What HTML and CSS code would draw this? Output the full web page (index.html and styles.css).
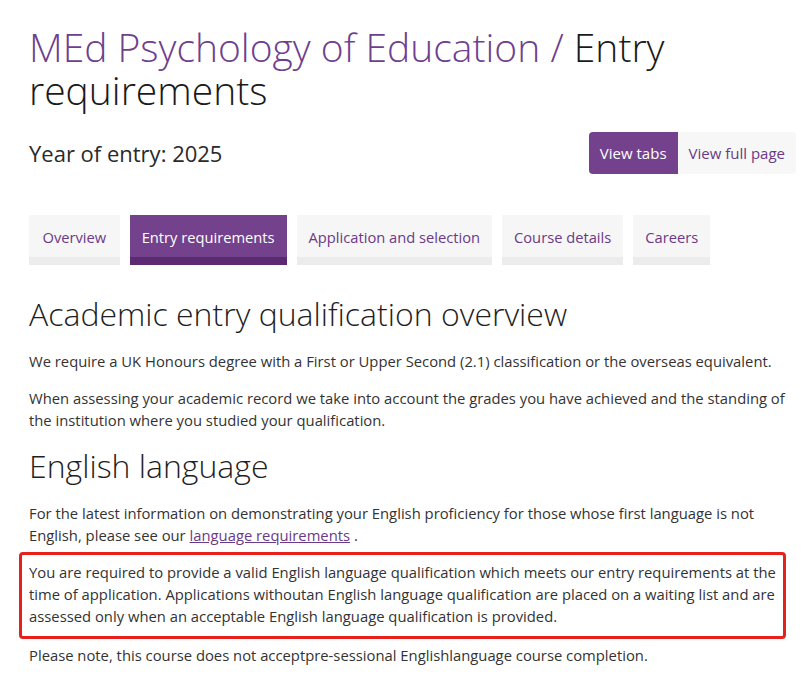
FILE: index.html
```html
<!DOCTYPE html>
<html lang="en">
<head>
<meta charset="utf-8">
<title>MEd Psychology of Education / Entry requirements</title>
<link rel="stylesheet" href="styles.css">
</head>
<body>
<main class="page">
  <h1 class="title"><span class="title-course">MEd Psychology of Education /</span> Entry requirements</h1>

  <div class="year-row">
    <div class="year">Year of entry: 2025</div>
    <div class="view-toggle">
      <a class="view-btn active" href="#">View tabs</a>
      <a class="view-btn" href="#">View full page</a>
    </div>
  </div>

  <nav class="tabs">
    <a class="tab" href="#">Overview</a>
    <a class="tab active" href="#">Entry requirements</a>
    <a class="tab" href="#">Application and selection</a>
    <a class="tab" href="#">Course details</a>
    <a class="tab" href="#">Careers</a>
  </nav>

  <section class="content">
    <h2>Academic entry qualification overview</h2>
    <p>We require a UK Honours degree with a First or Upper Second (2.1) classification or the overseas equivalent.</p>
    <p>When assessing your academic record we take into account the grades you have achieved and the standing of the institution where you studied your qualification.</p>

    <h2>English language</h2>
    <p>For the latest information on demonstrating your English proficiency for those whose first language is not English, please see our <a class="link" href="#">language requirements</a> .</p>
    <div class="highlight">
      <p>You are required to provide a valid English language qualification which meets our entry requirements at the time of application. Applications withoutan English language qualification are placed on a waiting list and are assessed only when an acceptable English language qualification is provided.</p>
    </div>
    <p>Please note, this course does not acceptpre-sessional Englishlanguage course completion.</p>
  </section>
</main>
</body>
</html>
```

FILE: styles.css
```css
* { box-sizing: border-box; }

html, body {
  margin: 0;
  padding: 0;
  background: #ffffff;
}

body {
  font-family: "Open Sans", "Liberation Sans", sans-serif;
  color: #333333;
  font-size: 14.8px;
  line-height: 22.2px;
}

.page {
  padding: 25px 10px 0 29px;
}

.title {
  margin: 0;
  font-size: 39px;
  line-height: 43px;
  font-weight: 300;
  color: #1a1a1a;
}

.title-course {
  color: #6f3f8f;
}

.year-row {
  display: flex;
  align-items: center;
  justify-content: space-between;
  margin-top: 21px;
}

.year {
  font-size: 22px;
  line-height: 28px;
  color: #2a2a2a;
}

.view-toggle {
  display: flex;
}

.view-btn {
  display: block;
  height: 42px;
  line-height: 42px;
  padding: 0 11px;
  font-size: 15px;
  text-decoration: none;
  color: #6a3a88;
  background: #f7f7f7;
  border-radius: 0 4px 4px 0;
}

.view-btn.active {
  background: #74428c;
  color: #ffffff;
  border-radius: 4px 0 0 4px;
}

.tabs {
  display: flex;
  gap: 10px;
  margin-top: 41px;
}

.tab {
  display: block;
  height: 50px;
  padding: 0 12px;
  line-height: 44px;
  font-size: 14.7px;
  text-decoration: none;
  color: #6a3a88;
  background: #f6f6f6;
  border-bottom: 8px solid #ececec;
}

.tab:first-child {
  padding: 0 13.5px;
}

.tab.active {
  background: #74428c;
  color: #ffffff;
  border-bottom-color: #5c2a72;
}

.content {
  margin-top: 30px;
}

.content h2 {
  margin: 0 0 17px;
  font-size: 32px;
  line-height: 38px;
  font-weight: 300;
  color: #1f1f1f;
}

.content p {
  margin: 0 0 15px;
}

.link {
  color: #6a3a88;
  text-decoration: underline;
}

.highlight {
  margin: -9px 10px 5px -10px;
  padding: 6px 4px 8px 7px;
  border: 3px solid #e8201c;
  border-radius: 4px;
}

.highlight p {
  margin: 0;
}
```
